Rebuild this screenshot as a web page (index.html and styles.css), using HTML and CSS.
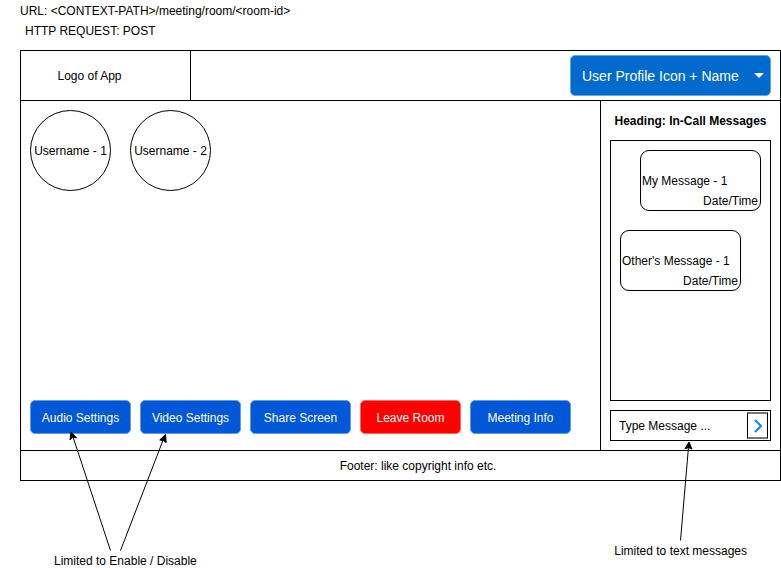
FILE: index.html
```html
<!DOCTYPE html>
<html lang="en">
<head>
<meta charset="utf-8">
<meta name="viewport" content="width=device-width, initial-scale=1">
<title>Meeting Room</title>
<link rel="stylesheet" href="styles.css">
</head>
<body>
<div class="request">
  <p>URL: &lt;CONTEXT-PATH&gt;/meeting/room/&lt;room-id&gt;</p>
  <p class="request-method">HTTP REQUEST: POST</p>
</div>

<div class="app">
  <header class="topbar">
    <div class="logo">Logo of App</div>
    <button type="button" class="profile" aria-haspopup="menu">
      <span>User Profile Icon + Name</span>
      <svg class="caret" viewBox="0 0 10 5" aria-hidden="true"><path d="M0 0H10L5 5Z"/></svg>
    </button>
  </header>

  <div class="room">
    <main class="stage">
      <ul class="people">
        <li>Username - 1</li>
        <li>Username - 2</li>
      </ul>
      <div class="controls">
        <button type="button">Audio Settings</button>
        <button type="button">Video Settings</button>
        <button type="button">Share Screen</button>
        <button type="button" class="leave">Leave Room</button>
        <button type="button">Meeting Info</button>
      </div>
    </main>

    <aside class="chat">
      <h2>Heading: In-Call Messages</h2>
      <div class="messages">
        <article class="message mine">
          <p>My Message - 1</p>
          <p class="time">Date/Time</p>
        </article>
        <article class="message">
          <p>Other's Message - 1</p>
          <p class="time">Date/Time</p>
        </article>
      </div>
      <form class="composer">
        <input type="text" placeholder="Type Message ..." aria-label="Type Message">
        <button type="button" aria-label="Send">
          <svg viewBox="0 0 8 14" aria-hidden="true"><path d="M1 1L7 7L1 13"/></svg>
        </button>
      </form>
    </aside>
  </div>

  <footer class="footer">Footer: like copyright info etc.</footer>
</div>

<div class="notes">
  <div class="note note-settings">
    Limited to Enable / Disable
    <svg class="arrows" viewBox="0 0 110 120" width="110" height="120" aria-hidden="true">
      <path class="line" d="M47.500 119.500L10 6"/>
      <path class="head" d="M8 1L13.500 6.800L9.800 6.300L7 9Z"/>
      <path class="line" d="M57.500 119.500L100.500 8"/>
      <path class="head" d="M102.500 3.500L103.200 11.500L100.200 9.500L96.700 9Z"/>
    </svg>
  </div>
  <div class="note note-text">
    Limited to text messages
    <svg class="arrows" viewBox="0 0 20 102" width="20" height="102" aria-hidden="true">
      <path class="line" d="M10.500 101.500L18.500 8"/>
      <path class="head" d="M19 3L22 10.200L18.600 8.500L15 9.700Z"/>
    </svg>
  </div>
</div>
</body>
</html>
```
FILE: styles.css
```css
* {
  box-sizing: border-box;
}

body {
  margin: 0;
  padding-left: 20px;
  background: #fff;
  color: #000;
  font: 12px/20px "Liberation Sans", Arial, Helvetica, sans-serif;
}

p, h2, ul {
  margin: 0;
  padding: 0;
}

button, input {
  font: inherit;
}

.request {
  padding: 1px 0 9px;
}

.request-method {
  padding-left: 5px;
}

.app {
  border: 1px solid #000;
}

.topbar {
  display: flex;
  justify-content: space-between;
  height: 50px;
  border-bottom: 1px solid #000;
}

.logo {
  display: flex;
  align-items: center;
  justify-content: center;
  width: 170px;
  padding-right: 32px;
  border-right: 1px solid #000;
}

.profile {
  display: flex;
  align-items: center;
  justify-content: space-between;
  width: 201px;
  height: 41px;
  margin: 4px 9px 0 0;
  padding: 0 6px 0 11px;
  border: 1px solid #66a6e0;
  border-radius: 5px;
  background: #006bcc;
  color: #fff;
  font-size: 14px;
}

.caret {
  width: 10px;
  height: 5px;
  fill: #fff;
}

.room {
  display: flex;
  min-height: 350px;
  border-bottom: 1px solid #000;
}

.stage {
  display: flex;
  flex: 1;
  flex-direction: column;
  justify-content: space-between;
  padding: 9px 9px 16px;
}

.people {
  display: flex;
  gap: 19px;
  list-style: none;
}

.people li {
  display: flex;
  align-items: center;
  justify-content: center;
  width: 81px;
  height: 81px;
  border: 1px solid #000;
  border-radius: 50%;
  white-space: nowrap;
}

.controls {
  display: flex;
  gap: 9px;
}

.controls button {
  width: 101px;
  height: 34px;
  padding: 2px 0 0;
  border: 1px solid #6699e6;
  border-radius: 5px;
  background: #0057d8;
  color: #fff;
}

.controls .leave {
  border-color: #f66;
  background: #f00;
}

.chat {
  display: flex;
  flex-direction: column;
  width: 180px;
  padding: 10px 9px 9px;
  border-left: 1px solid #000;
}

.chat h2 {
  margin-bottom: 9px;
  font-size: 12px;
  line-height: 20px;
  text-align: center;
  white-space: nowrap;
}

.messages {
  display: flex;
  flex: 1;
  flex-direction: column;
  gap: 19px;
  margin-bottom: 9px;
  padding: 9px;
  border: 1px solid #000;
}

.message {
  width: 121px;
  height: 61px;
  padding: 20px 2px 0 1px;
  border: 1px solid #000;
  border-radius: 9px;
  white-space: nowrap;
}

.mine {
  align-self: flex-end;
}

.time {
  text-align: right;
}

.composer {
  display: flex;
  height: 31px;
  padding: 1px 2px 1px 0;
  border: 1px solid #000;
}

.composer input {
  flex: 1;
  min-width: 0;
  padding: 0 8px;
  border: 0;
  background: none;
}

.composer input::placeholder {
  color: #000;
  opacity: 1;
}

.composer button {
  display: flex;
  align-items: center;
  justify-content: center;
  width: 21px;
  padding: 0;
  border: 1px solid #000;
  border-width: 2px 1px;
  border-color: #777 #000;
  background: #fff;
}

.composer svg {
  width: 8px;
  height: 14px;
  fill: none;
  stroke: #0a84ff;
  stroke-width: 2;
}

.footer {
  height: 29px;
  padding: 5px 0 4px 35px;
  text-align: center;
}

.notes {
  display: flex;
  justify-content: space-between;
  align-items: flex-start;
  padding: 60px 34px 0;
}

.note {
  position: relative;
  white-space: nowrap;
}

.note-settings {
  margin-top: 10px;
}

.arrows {
  position: absolute;
  bottom: 100%;
  left: 9px;
  overflow: visible;
  pointer-events: none;
}

.note-text .arrows {
  left: 56px;
}

.line {
  fill: none;
  stroke: #000;
}

.head {
  fill: #000;
  stroke: #000;
}
```
